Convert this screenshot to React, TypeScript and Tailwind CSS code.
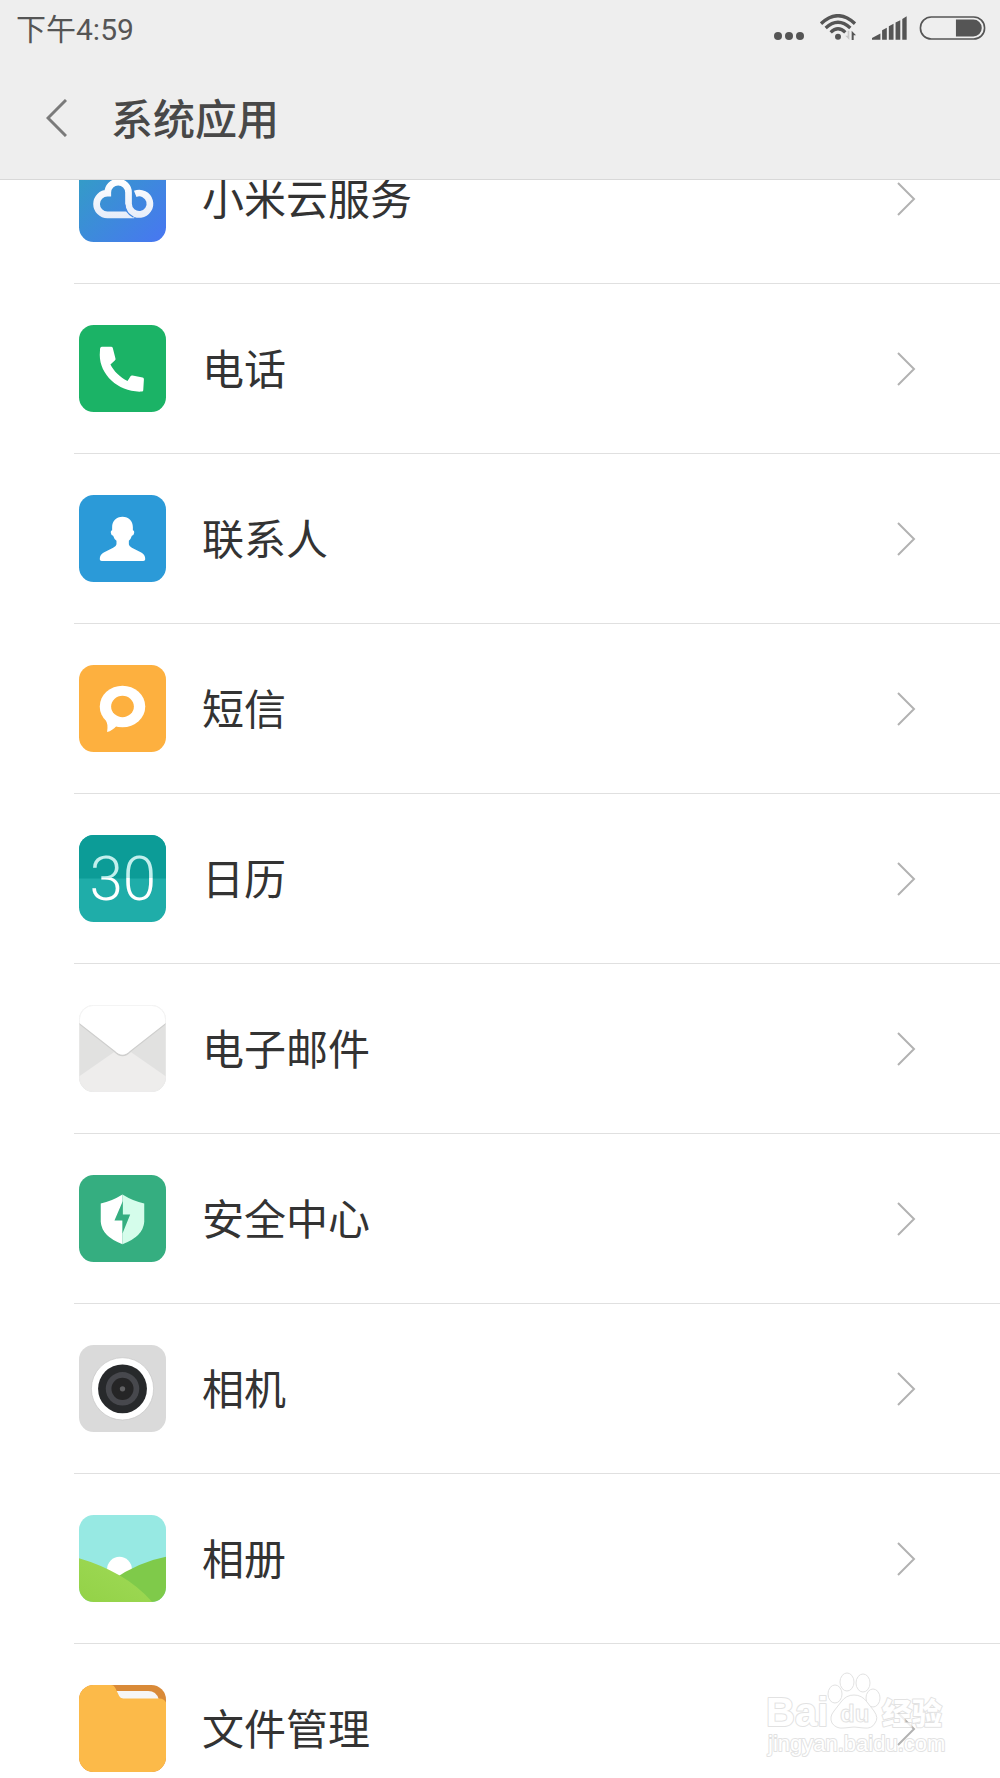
import type { ReactNode } from 'react'

type AppItem = {
  name: string
  icon: ReactNode
}

function IconFrame({ id, children }: { id: string; children: ReactNode }) {
  return (
    <svg viewBox="0 0 260 260" className="size-[87px] shrink-0" aria-hidden="true">
      <defs>
        <clipPath id={id}>
          <rect width="260" height="260" rx="44" />
        </clipPath>
      </defs>
      <g clipPath={`url(#${id})`}>{children}</g>
    </svg>
  )
}

function CloudIcon() {
  return (
    <IconFrame id="cloud">
      <defs>
        <linearGradient id="cloud-bg" x1="0" y1="0" x2="1" y2="1">
          <stop offset="0.15" stopColor="#349bc8" />
          <stop offset="1" stopColor="#4876f2" />
        </linearGradient>
        <linearGradient id="cloud-line" x1="0" y1="70" x2="0" y2="190" gradientUnits="userSpaceOnUse">
          <stop offset="0" stopColor="#ffffff" />
          <stop offset="1" stopColor="#e6edf9" />
        </linearGradient>
      </defs>
      <rect width="260" height="260" fill="url(#cloud-bg)" />
      <path d="M165 179H85a32 32 0 0 1 0-65h1v-2a31 31 0 0 1 62 0v34a32 32 0 1 0 20-30" fill="none" stroke="url(#cloud-line)" strokeWidth="20" />
      <path d="M137 148c1 16 10 30 26 38" fill="none" stroke="#4287e0" strokeWidth="4" />
    </IconFrame>
  )
}

function PhoneIcon() {
  return (
    <IconFrame id="phone">
      <rect width="260" height="260" fill="#1bb366" />
      <path d="M68 65h28q4 0 5 4l8 31q1 4-2 6l-13 12c10 20 28 38 51 49l9-14q2-3 6-2l30 6q4 1 4 5l-2 33q0 4-4 4C120 203 62 150 62 90l1-20q1-5 5-5z" fill="#fff" />
    </IconFrame>
  )
}

function ContactsIcon() {
  return (
    <IconFrame id="contacts">
      <rect width="260" height="260" fill="#2b9ad8" />
      <path d="M130 65C149 65 161 78 161 96V105Q166 106 165 113Q164 121 158 122Q155 132 149 137V147Q150 154 158 158L186 172Q198 178 198 192Q198 197 192 197H68Q62 197 62 192Q62 178 74 172L102 158Q111 154 112 147V137Q105 132 102 122Q96 121 95 113Q94 106 99 105V96C99 78 111 65 130 65Z" fill="#fff" />
    </IconFrame>
  )
}

function MessageIcon() {
  return (
    <IconFrame id="message">
      <rect width="260" height="260" fill="#fdb03f" />
      <ellipse cx="130" cy="124" rx="68" ry="62" fill="#fff" />
      <path d="M78 160q10 16 6 40q16-4 28-18l10-20z" fill="#fff" />
      <ellipse cx="130" cy="124" rx="34" ry="32" fill="#fdb03f" />
    </IconFrame>
  )
}

function CalendarIcon() {
  return (
    <IconFrame id="calendar">
      <defs>
        <linearGradient id="calendar-digits" x1="0" y1="0" x2="0" y2="260" gradientUnits="userSpaceOnUse">
          <stop offset="0.5" stopColor="#c2efed" />
          <stop offset="0.5" stopColor="#ffffff" />
        </linearGradient>
      </defs>
      <rect width="260" height="260" fill="#1fada9" />
      <rect width="260" height="130" fill="#0c9c97" />
      <text x="131" y="194" textAnchor="middle" fontSize="180" fill="url(#calendar-digits)" className="font-['Roboto',sans-serif] font-light">
        30
      </text>
    </IconFrame>
  )
}

function MailIcon() {
  return (
    <IconFrame id="mail">
      <rect width="260" height="260" fill="#e1e1e0" />
      <path d="M0 214L104 141h52L260 214V260H0z" fill="#eeedec" />
      <path d="M-4 52L106 138Q130 164 154 138L264 52" fill="none" stroke="#cfcfce" strokeWidth="4" />
      <path d="M0 0H260V53L154 136Q130 160 106 136L0 53z" fill="#fff" />
      <rect x="1" y="1" width="258" height="258" rx="43" fill="none" stroke="#ececec" strokeWidth="2" />
    </IconFrame>
  )
}

function SecurityIcon() {
  return (
    <IconFrame id="security">
      <rect width="260" height="260" fill="#35ae80" />
      <path d="M130 58Q98 78 65 85V140Q68 184 130 207z" fill="#fff" />
      <path d="M130 58Q162 78 195 85V140Q192 184 130 207z" fill="#d5fdeb" />
      <path d="M131 78V118h22L130 175V136H106z" fill="#35ae80" />
    </IconFrame>
  )
}

function CameraIcon() {
  return (
    <IconFrame id="camera">
      <rect width="260" height="260" fill="#dadada" />
      <circle cx="130" cy="131" r="93" fill="#fff" stroke="#c6c6c6" strokeWidth="2" />
      <circle cx="130" cy="131" r="73" fill="#27292b" />
      <circle cx="130" cy="131" r="50" fill="#47484d" />
      <circle cx="130" cy="131" r="33" fill="#252526" />
      <circle cx="130" cy="131" r="8" fill="#606062" />
    </IconFrame>
  )
}

function GalleryIcon() {
  return (
    <IconFrame id="gallery">
      <defs>
        <linearGradient id="gallery-hill" x1="0" y1="1" x2="1" y2="0">
          <stop offset="0" stopColor="#93d247" />
          <stop offset="1" stopColor="#a0da58" />
        </linearGradient>
      </defs>
      <rect width="260" height="260" fill="#97e9e3" />
      <circle cx="121" cy="162" r="37" fill="#fff" />
      <path d="M100 194Q180 140 260 125V260H100z" fill="#7fca4a" />
      <path d="M0 129Q66 148 122 181Q176 212 219 260H0z" fill="url(#gallery-hill)" />
    </IconFrame>
  )
}

function FilesIcon() {
  return (
    <IconFrame id="files">
      <rect width="260" height="260" fill="#d98a38" />
      <path d="M108 18h99q24 0 31 24H108z" fill="#f6f6f6" />
      <path d="M0 0H95q10 0 14 10l11 23q3 7 12 7H240q14 0 20 12V260H0z" fill="#fcba49" />
    </IconFrame>
  )
}

const apps: AppItem[] = [
  { name: '小米云服务', icon: <CloudIcon /> },
  { name: '电话', icon: <PhoneIcon /> },
  { name: '联系人', icon: <ContactsIcon /> },
  { name: '短信', icon: <MessageIcon /> },
  { name: '日历', icon: <CalendarIcon /> },
  { name: '电子邮件', icon: <MailIcon /> },
  { name: '安全中心', icon: <SecurityIcon /> },
  { name: '相机', icon: <CameraIcon /> },
  { name: '相册', icon: <GalleryIcon /> },
  { name: '文件管理', icon: <FilesIcon /> },
]

function StatusBar() {
  return (
    <div className="flex h-[58px] items-start justify-between pl-4 pr-3.5 pt-3">
      <span className="font-['Roboto','Noto_Sans_CJK_SC',sans-serif] text-[30px] leading-9 text-[#555]">下午4:59</span>
      <div className="flex items-end gap-3 pt-0.5 text-[#555]">
        <div className="flex items-end gap-4">
          <svg viewBox="0 0 30 8" className="h-2 w-[30px]" fill="currentColor" aria-hidden="true">
            <circle cx="4" cy="4" r="4" />
            <circle cx="15" cy="4" r="4" />
            <circle cx="26" cy="4" r="4" />
          </svg>
          {/* Wi-Fi */}
          <svg viewBox="0 0 108 78" className="h-[26px] w-9" fill="none" stroke="currentColor" strokeWidth="10" aria-hidden="true">
            <path d="M3 29Q54-19 105 29" />
            <path d="M17 42Q54 8 91 42" />
            <path d="M32 55Q54 34 76 55" />
            <circle cx="54" cy="68" r="9" fill="currentColor" stroke="none" />
            <path d="M88 50v28l-12-13h7V50z" fill="#c6c6c6" stroke="none" />
            <path d="M95 78V50l13 14h-7v14z" fill="currentColor" stroke="none" />
          </svg>
          {/* Signal */}
          <svg viewBox="0 0 104 70" className="h-6 w-[35px]" fill="currentColor" aria-hidden="true">
            <path d="M0 70v-5l25-14v19zM30 70V42l14-8v36zM50 70V30l14-8v48zM70 70V19l14-7v58zM90 70V8l13-8v70z" />
          </svg>
        </div>
        {/* Battery */}
        <svg viewBox="0 0 201 73" className="h-6 w-[67px]" aria-hidden="true">
          <rect x="3" y="3" width="195" height="67" rx="33" fill="none" stroke="currentColor" strokeWidth="5" />
          <path d="M111 11h53a25 25 0 0 1 0 51h-53z" fill="currentColor" />
        </svg>
      </div>
    </div>
  )
}

function Watermark() {
  return (
    <svg
      viewBox="0 0 190 100"
      className="pointer-events-none absolute bottom-3.5 right-[50px] h-[100px] w-[190px] opacity-80"
      fill="#fff"
      stroke="#dcdcdc"
      strokeWidth="2"
      strokeLinejoin="round"
    >
      <g className="[paint-order:stroke]">
        <text x="6" y="62" fontSize="40" className="font-['Liberation_Sans',sans-serif] font-bold">Bai</text>
        <text x="122" y="60" fontSize="30" className="font-['Noto_Sans_CJK_SC',sans-serif] font-black">经验</text>
        <text x="8" y="87" fontSize="22" className="font-['Liberation_Sans',sans-serif]">jingyan.baidu.com</text>
      </g>
      <g strokeWidth="1">
        <ellipse cx="75" cy="30" rx="7" ry="9" />
        <ellipse cx="87" cy="18" rx="7" ry="9" />
        <ellipse cx="103" cy="19" rx="7" ry="9" />
        <ellipse cx="113" cy="34" rx="7" ry="9" />
        <path d="M94 31q8 0 13 7l7 9q5 7 1 12-3 6-11 5-10-2-20 0-8 1-12-5-3-6 2-12l7-9q5-7 13-7z" />
      </g>
      <text x="80" y="58" fontSize="24" strokeWidth="1" className="font-['Liberation_Sans',sans-serif] font-bold">du</text>
    </svg>
  )
}

export default function App() {
  return (
    <div className="relative flex h-screen flex-col overflow-hidden bg-white font-['Noto_Sans_CJK_SC',sans-serif]">
      <header className="z-10 shrink-0 border-b border-[#d8d8d8] bg-[#eee]">
        <StatusBar />
        <div className="flex h-[121px] items-start gap-[44px] pl-[46px] pt-[30px]">
          <button type="button" aria-label="返回" className="flex h-[60px] items-center">
            <svg viewBox="0 0 21 38" className="h-[38px] w-[21px]" fill="none" stroke="#7a7a7a" strokeWidth="3" aria-hidden="true">
              <path d="M20 1L2 19l18 18" />
            </svg>
          </button>
          <h1 className="text-[42px] font-medium leading-[58px] text-[#484848]">系统应用</h1>
        </div>
      </header>

      <main className="min-h-0 flex-1">
        {/* The list is scrolled a little way under the header */}
        <ul className="-mt-[66px]">
          {apps.map((app) => (
            <li key={app.name} className="ml-[74px] border-b border-[#e0e0e0]">
              <a href="#" className="flex h-[169px] items-center pl-[5px] pr-[84px]">
                {app.icon}
                <span className="ml-9 flex-1 pb-1 text-[42px] leading-[60px] text-[#333]">{app.name}</span>
                <svg viewBox="0 0 20 36" className="h-9 w-5 shrink-0" fill="none" stroke="#b2b2b2" strokeWidth="2" aria-hidden="true">
                  <path d="M2 2l16 16L2 34" />
                </svg>
              </a>
            </li>
          ))}
        </ul>
      </main>

      <Watermark />
    </div>
  )
}
